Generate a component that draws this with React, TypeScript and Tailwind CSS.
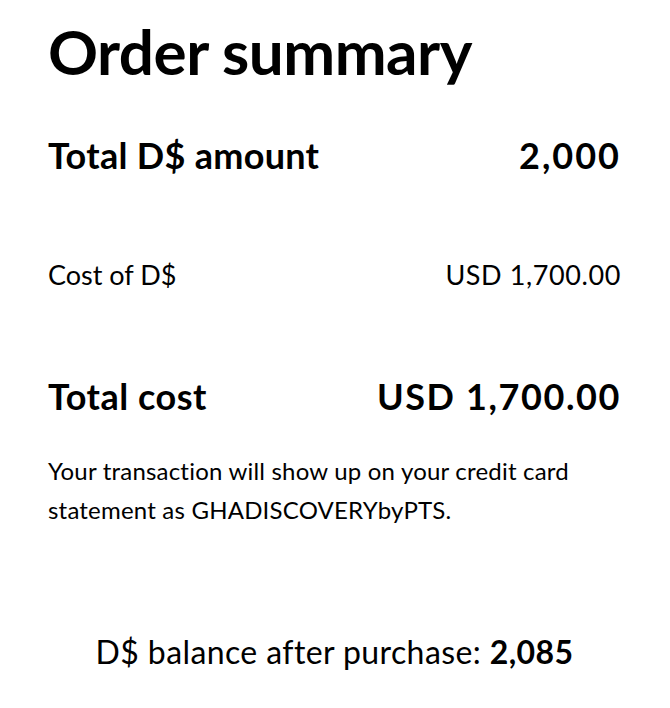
export default function App() {
  return (
    <div className="w-[670px] h-[708px] bg-white text-black pl-[48px] pr-[49px] font-['Lato','Noto_Sans',sans-serif]">
      <h1 className="pt-[15px] text-[62px] leading-[72px] font-bold tracking-[-0.5px]">Order summary</h1>

      <div className="mt-[48px] flex items-center justify-between text-[36px] leading-[40px] font-bold">
        <span className="tracking-[0.3px]">Total D$ amount</span>
        <span className="tracking-[2px]">2,000</span>
      </div>

      <div className="mt-[80px] flex items-center justify-between text-[27px] leading-[40px]">
        <span>Cost of D$</span>
        <span className="tracking-[0.6px]">USD 1,700.00</span>
      </div>

      <div className="mt-[81px] flex items-center justify-between text-[36px] leading-[40px] font-bold">
        <span className="tracking-[0.5px]">Total cost</span>
        <span className="tracking-[1.6px]">USD 1,700.00</span>
      </div>

      <p className="mt-[35px] text-[24px] leading-[39px] tracking-[0.2px]">
        Your transaction will show up on your credit card statement as GHADISCOVERYbyPTS.
      </p>

      <p className="mt-[103px] text-center text-[32px] leading-[40px] tracking-[0.4px]">
        D$ balance after purchase: <span className="font-bold">2,085</span>
      </p>
    </div>
  )
}
